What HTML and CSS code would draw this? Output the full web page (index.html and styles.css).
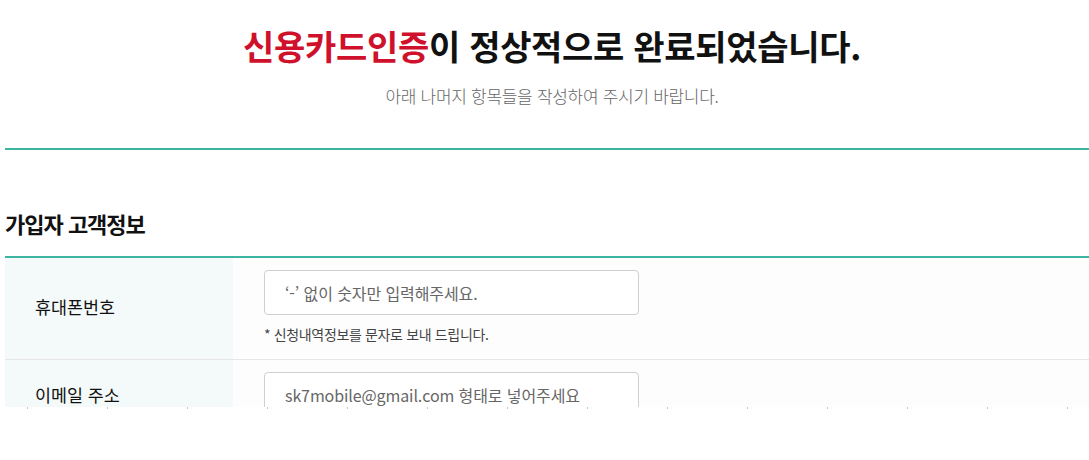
FILE: index.html
```html
<!DOCTYPE html>
<html lang="ko">
<head>
<meta charset="utf-8">
<title>신용카드인증 완료</title>
<link rel="stylesheet" href="styles.css">
</head>
<body>
<div class="viewport">
  <div class="page">
    <header class="intro">
      <h1 class="title"><span class="accent">신용카드인증</span>이 정상적으로 완료되었습니다.</h1>
      <p class="subtitle">아래 나머지 항목들을 작성하여 주시기 바랍니다.</p>
    </header>
    <section class="section">
      <h2 class="section-title">가입자 고객정보</h2>
      <div class="form-table">
        <div class="row">
          <div class="label">휴대폰번호</div>
          <div class="field">
            <div class="input">‘-’ 없이 숫자만 입력해주세요.</div>
            <p class="note">* 신청내역정보를 문자로 보내 드립니다.</p>
          </div>
        </div>
        <div class="row">
          <div class="label">이메일 주소</div>
          <div class="field">
            <div class="input">sk7mobile@gmail.com 형태로 넣어주세요</div>
          </div>
        </div>
      </div>
    </section>
  </div>
</div>
<div class="ruler"></div>
</body>
</html>
```
FILE: styles.css
```css
* { box-sizing: border-box; }
html, body { margin: 0; padding: 0; background: #fff; }
body {
  font-family: "Noto Sans CJK KR", "Noto Sans", sans-serif;
  color: #111;
}
.viewport {
  height: 407px;
  overflow: hidden;
}
.page {
  padding-left: 5px;
}
.intro {
  text-align: center;
  padding: 20px 0 0 10px;
  height: 150px;
  border-bottom: 2px solid #3cb5a2;
}
.title {
  margin: 0;
  font-size: 34px;
  font-weight: 700;
  line-height: 52px;
  letter-spacing: -0.3px;
  color: #111;
}
.accent { color: #d0112b; }
.subtitle {
  margin: 12px 0 0;
  font-size: 17px;
  font-weight: 300;
  line-height: 24px;
  letter-spacing: -0.3px;
  color: #666;
}
.section-title {
  margin: 0;
  padding-top: 57px;
  height: 108px;
  font-size: 22px;
  line-height: 32px;
  font-weight: 700;
  letter-spacing: -1px;
  border-bottom: 2px solid #3cb5a2;
  color: #111;
}
.form-table {
  background: #fdfdfd;
}
.row {
  display: flex;
  border-bottom: 1px solid #e6e6e6;
}
.label {
  width: 228px;
  flex: none;
  display: flex;
  align-items: center;
  padding: 0 0 4px 30px;
  background: #f4faf9;
  font-size: 17.4px;
  color: #111;
}
.field {
  padding: 12px 0 15px 31px;
}
.input {
  width: 375px;
  height: 45px;
  border: 1px solid #cfcfcf;
  border-radius: 4px;
  background: #fff;
  padding-left: 20px;
  display: flex;
  align-items: center;
  font-size: 16px;
  letter-spacing: -0.1px;
  color: #666;
}
.note {
  margin: 9px 0 0;
  font-size: 14px;
  line-height: 20px;
  letter-spacing: -0.35px;
  color: #444;
}
.ruler {
  height: 2px;
  background-image: linear-gradient(to right, transparent 27px, #c8c8c8 27px, #c8c8c8 28px, transparent 28px);
  background-size: 80px 2px;
  background-repeat: repeat-x;
}
```
